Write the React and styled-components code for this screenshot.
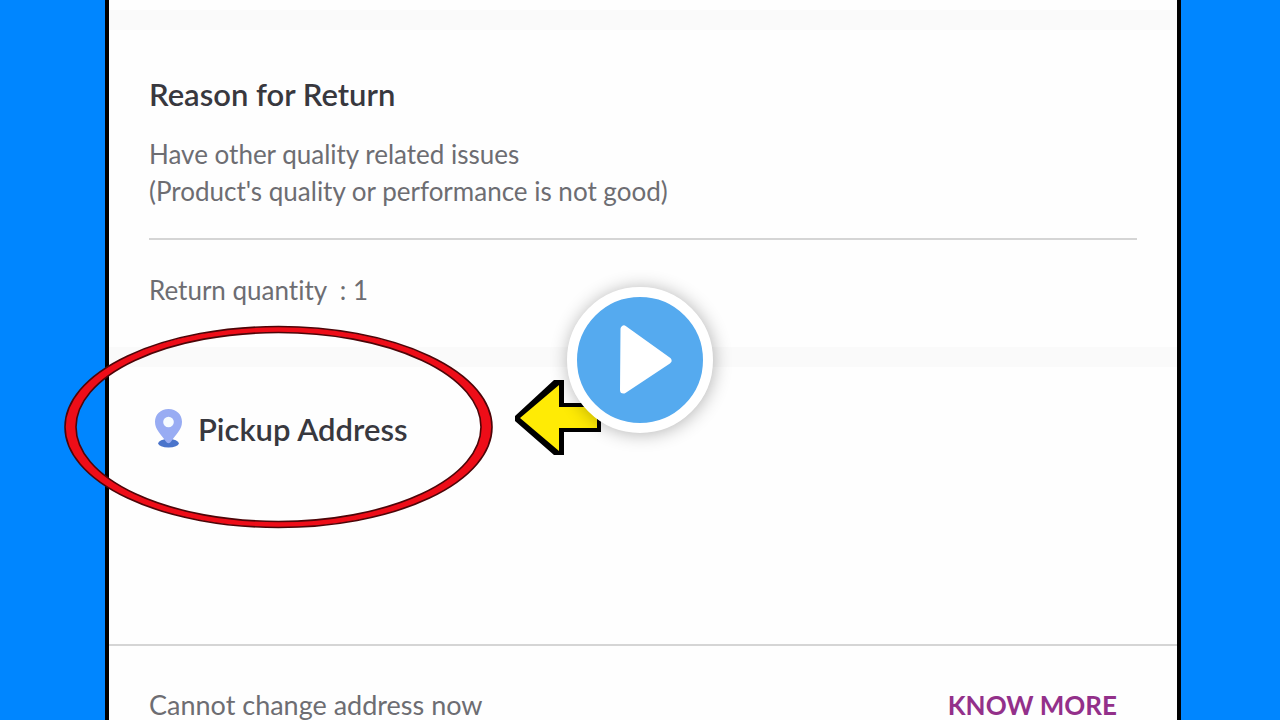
import React from "react";
import styled, { createGlobalStyle } from "styled-components";

const App = () => {
  return (
    <>
      <GlobalStyle />
      <Page>
        <Sheet>
          <Band first />
          <Reason>
            <Title>Reason for Return</Title>
            <Text>
              Have other quality related issues
              <br />
              (Product's quality or performance is not good)
            </Text>
            <Line />
            <Quantity>Return quantity&nbsp; : 1</Quantity>
          </Reason>
          <Band />
          <Pickup>
            <PickupRow>
              <PinIcon />
              <Title>Pickup Address</Title>
            </PickupRow>
            <Ring />
            <Arrow />
          </Pickup>
          <Footer>
            <span>Cannot change address now</span>
            <KnowMore href="#know-more">KNOW MORE</KnowMore>
          </Footer>
        </Sheet>
        <PlayButton aria-label="Play">
          <svg width="126" height="126" viewBox="0 0 126 126">
            <path d="M47 32 L46.5 93 L91 63.5 Z" fill="#fff" stroke="#fff" strokeWidth="7" strokeLinejoin="round" />
          </svg>
        </PlayButton>
      </Page>
    </>
  );
};

const PinIcon = () => (
  <svg width="30" height="40" viewBox="0 0 30 40" aria-hidden="true">
    <ellipse cx="14.5" cy="34.3" rx="10.3" ry="4.3" fill="#4a74cb" />
    <path d="M14.5 0 C6.5 0 1 5.5 1 12.8 C1 21 7 25 11.5 32 Q14.5 36.5 17.5 32 C22 25 28 21 28 12.8 C28 5.5 22.5 0 14.5 0 Z" fill="#98acf3" />
    <circle cx="14.5" cy="13" r="5.3" fill="#f5fbff" />
  </svg>
);

// hand drawn circle around the address title, thinner at top and bottom
const Ring = () => (
  <RingSvg width="430" height="206" viewBox="0 0 430 206" aria-hidden="true">
    <path
      d="M1 102 A213.5 100.5 0 0 1 428 102 A213.5 100.5 0 0 1 1 102 Z M12 102 A202.5 94.5 0 0 0 417 102 A202.5 94.5 0 0 0 12 102 Z"
      fill="#ee0d18"
      fillRule="evenodd"
      stroke="#4d0508"
      strokeWidth="1.6"
    />
  </RingSvg>
);

const Arrow = () => (
  <ArrowSvg width="88" height="76" viewBox="0 0 88 76" aria-hidden="true">
    <path d="M1 36 L40 0 H50 V23 H87 V52 H50 V75 H40 L1 41 Z" fill="#000" />
    <path d="M6 38 L45 5 V27 H83 V48 H45 V71 Z" fill="#ffeb05" />
  </ArrowSvg>
);

export default App;

const GlobalStyle = createGlobalStyle`
  body {
    margin: 0;
    background: #0086ff;
    font-family: Lato, "Liberation Sans", sans-serif;
    font-variant-ligatures: none;
  }
`;

const Page = styled.div`
  min-height: 100vh;
  display: flex;
  box-sizing: border-box;
  padding: 0 99px 0 105px;
  background: #0086ff;
`;

const Sheet = styled.main`
  flex: 1;
  border: solid #000;
  border-width: 0 4px;
  background: #fefefe;
`;

const Band = styled.div.withConfig({ shouldForwardProp: (p) => p !== "first" })`
  height: 20px;
  margin-top: ${(props) => (props.first ? "10px" : "0")};
  background: #fafafa;
`;

const Reason = styled.section`
  padding: 46px 40px 38px;
`;

const Title = styled.h2`
  margin: 0;
  font-size: 31px;
  line-height: 36px;
  font-weight: 600;
  color: #38383e;
`;

const Text = styled.p`
  margin: 24px 0 0;
  font-size: 26px;
  line-height: 37px;
  color: #6d6d72;
`;

const Line = styled.hr`
  margin: 28px 0 0;
  border: 0;
  height: 2px;
  background: #d5d5d5;
`;

const Quantity = styled.p`
  margin: 32px 0 0;
  font-size: 26px;
  line-height: 37px;
  color: #6d6d72;
`;

const Pickup = styled.section`
  position: relative;
  height: 277px;
  box-sizing: border-box;
  padding: 42px 45px;
`;

const PickupRow = styled.div`
  display: flex;
  align-items: center;
  gap: 14px;
`;

const RingSvg = styled.svg`
  position: absolute;
  left: -45px;
  top: -42px;
`;

const ArrowSvg = styled.svg`
  position: absolute;
  left: 405px;
  top: 13px;
`;

const Footer = styled.footer`
  display: flex;
  justify-content: space-between;
  padding: 44px 60px 0 40px;
  border-top: 2px solid #d5d5d5;
  font-size: 27px;
  line-height: 30px;
  color: #6d6d72;
`;

const KnowMore = styled.a`
  font-size: 26px;
  font-weight: 700;
  color: #93308a;
  text-decoration: none;
`;

const PlayButton = styled.button`
  position: fixed;
  left: 50%;
  top: 50%;
  width: 146px;
  height: 146px;
  margin: -73px;
  padding: 0;
  display: flex;
  align-items: center;
  justify-content: center;
  border: 10px solid #fff;
  border-radius: 50%;
  background: #55aaef;
  box-shadow: 1px 1px 18px rgba(0, 0, 0, 0.3);
  cursor: pointer;
`;
